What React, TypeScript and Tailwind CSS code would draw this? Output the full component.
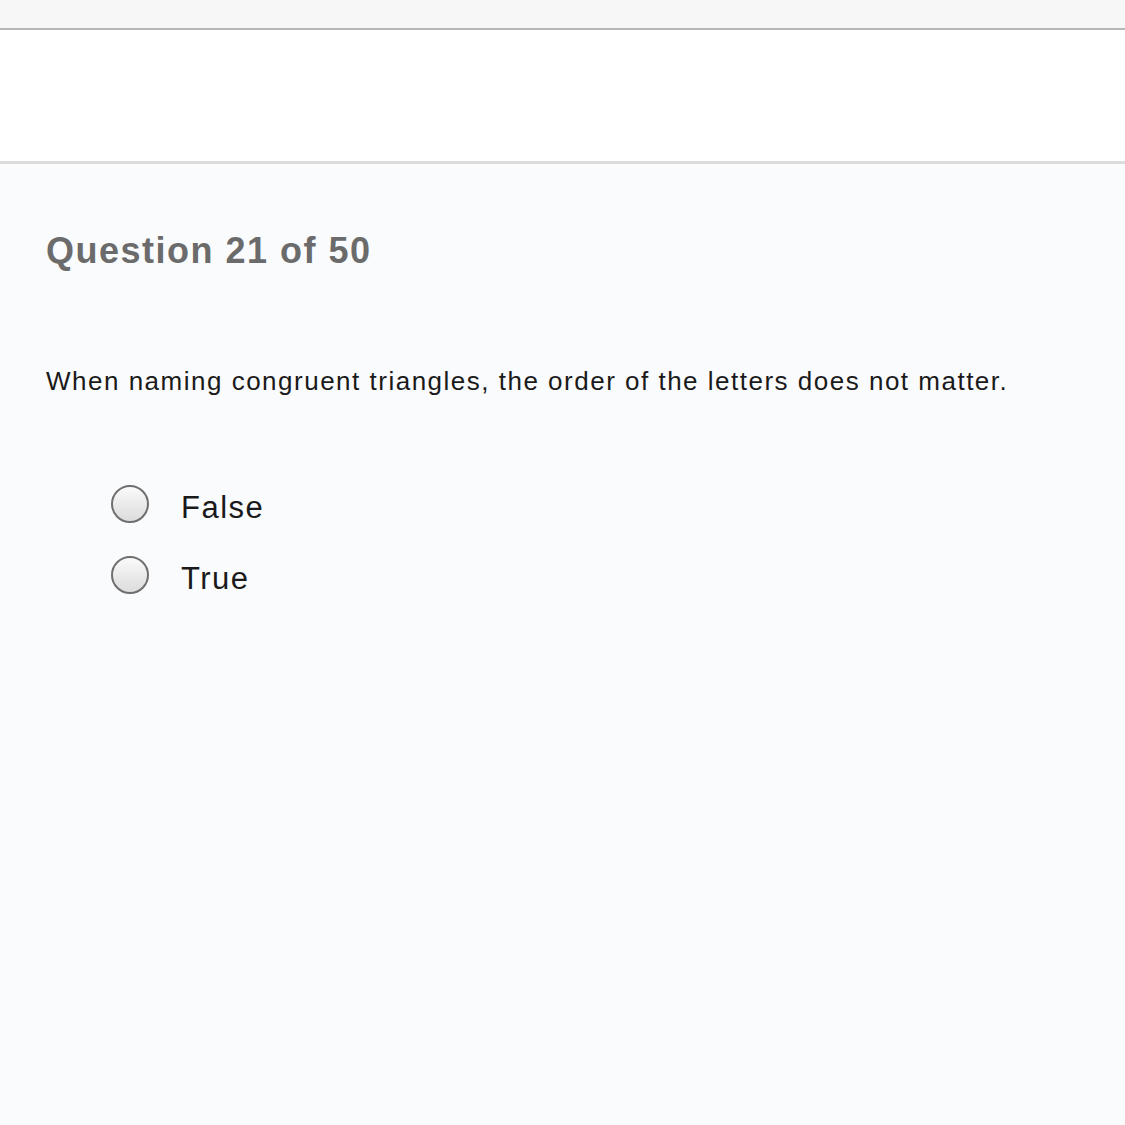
import React, { useState } from 'react';

const options = ['False', 'True'];

function Radio({ checked }: { checked: boolean }) {
  return (
    <span className="flex h-[38px] w-[38px] shrink-0 items-center justify-center rounded-full border-[2px] border-[#6f6f6f] bg-gradient-to-b from-[#fafafa] to-[#dcdcdc]">
      {checked && <span className="h-[14px] w-[14px] rounded-full bg-[#333]" />}
    </span>
  );
}

export default function App() {
  const [answer, setAnswer] = useState<string | null>(null);

  return (
    <div className="flex min-h-[1125px] flex-col bg-[#fafbfd] font-['Liberation_Sans',Arial,sans-serif]">
      {/* top toolbar */}
      <div className="h-[30px] border-b-[2px] border-[#b8b8b8] bg-[#f7f7f7]" />
      {/* header band */}
      <div className="h-[134px] border-b-[3px] border-[#dcdcdc] bg-white" />

      <main className="flex flex-col px-[46px] pt-[65px]">
        <h1 className="text-[36px] font-bold leading-[44px] tracking-[1.5px] text-[#6b6b6b]">Question 21 of 50</h1>

        <p className="mt-[93px] text-[26px] leading-[30px] tracking-[1.5px] text-[#1a1a1a]">
          When naming congruent triangles, the order of the letters does not matter.
        </p>

        <div className="mt-[85px] flex flex-col gap-[25px] pl-[65px]">
          {options.map((opt) => (
            <label
              key={opt}
              className="flex cursor-pointer items-center gap-[32px]"
              onClick={() => setAnswer(opt)}
            >
              <Radio checked={answer === opt} />
              <span className="pt-[8px] text-[31px] leading-[38px] tracking-[1.5px] text-[#1a1a1a]">{opt}</span>
            </label>
          ))}
        </div>
      </main>
    </div>
  );
}
